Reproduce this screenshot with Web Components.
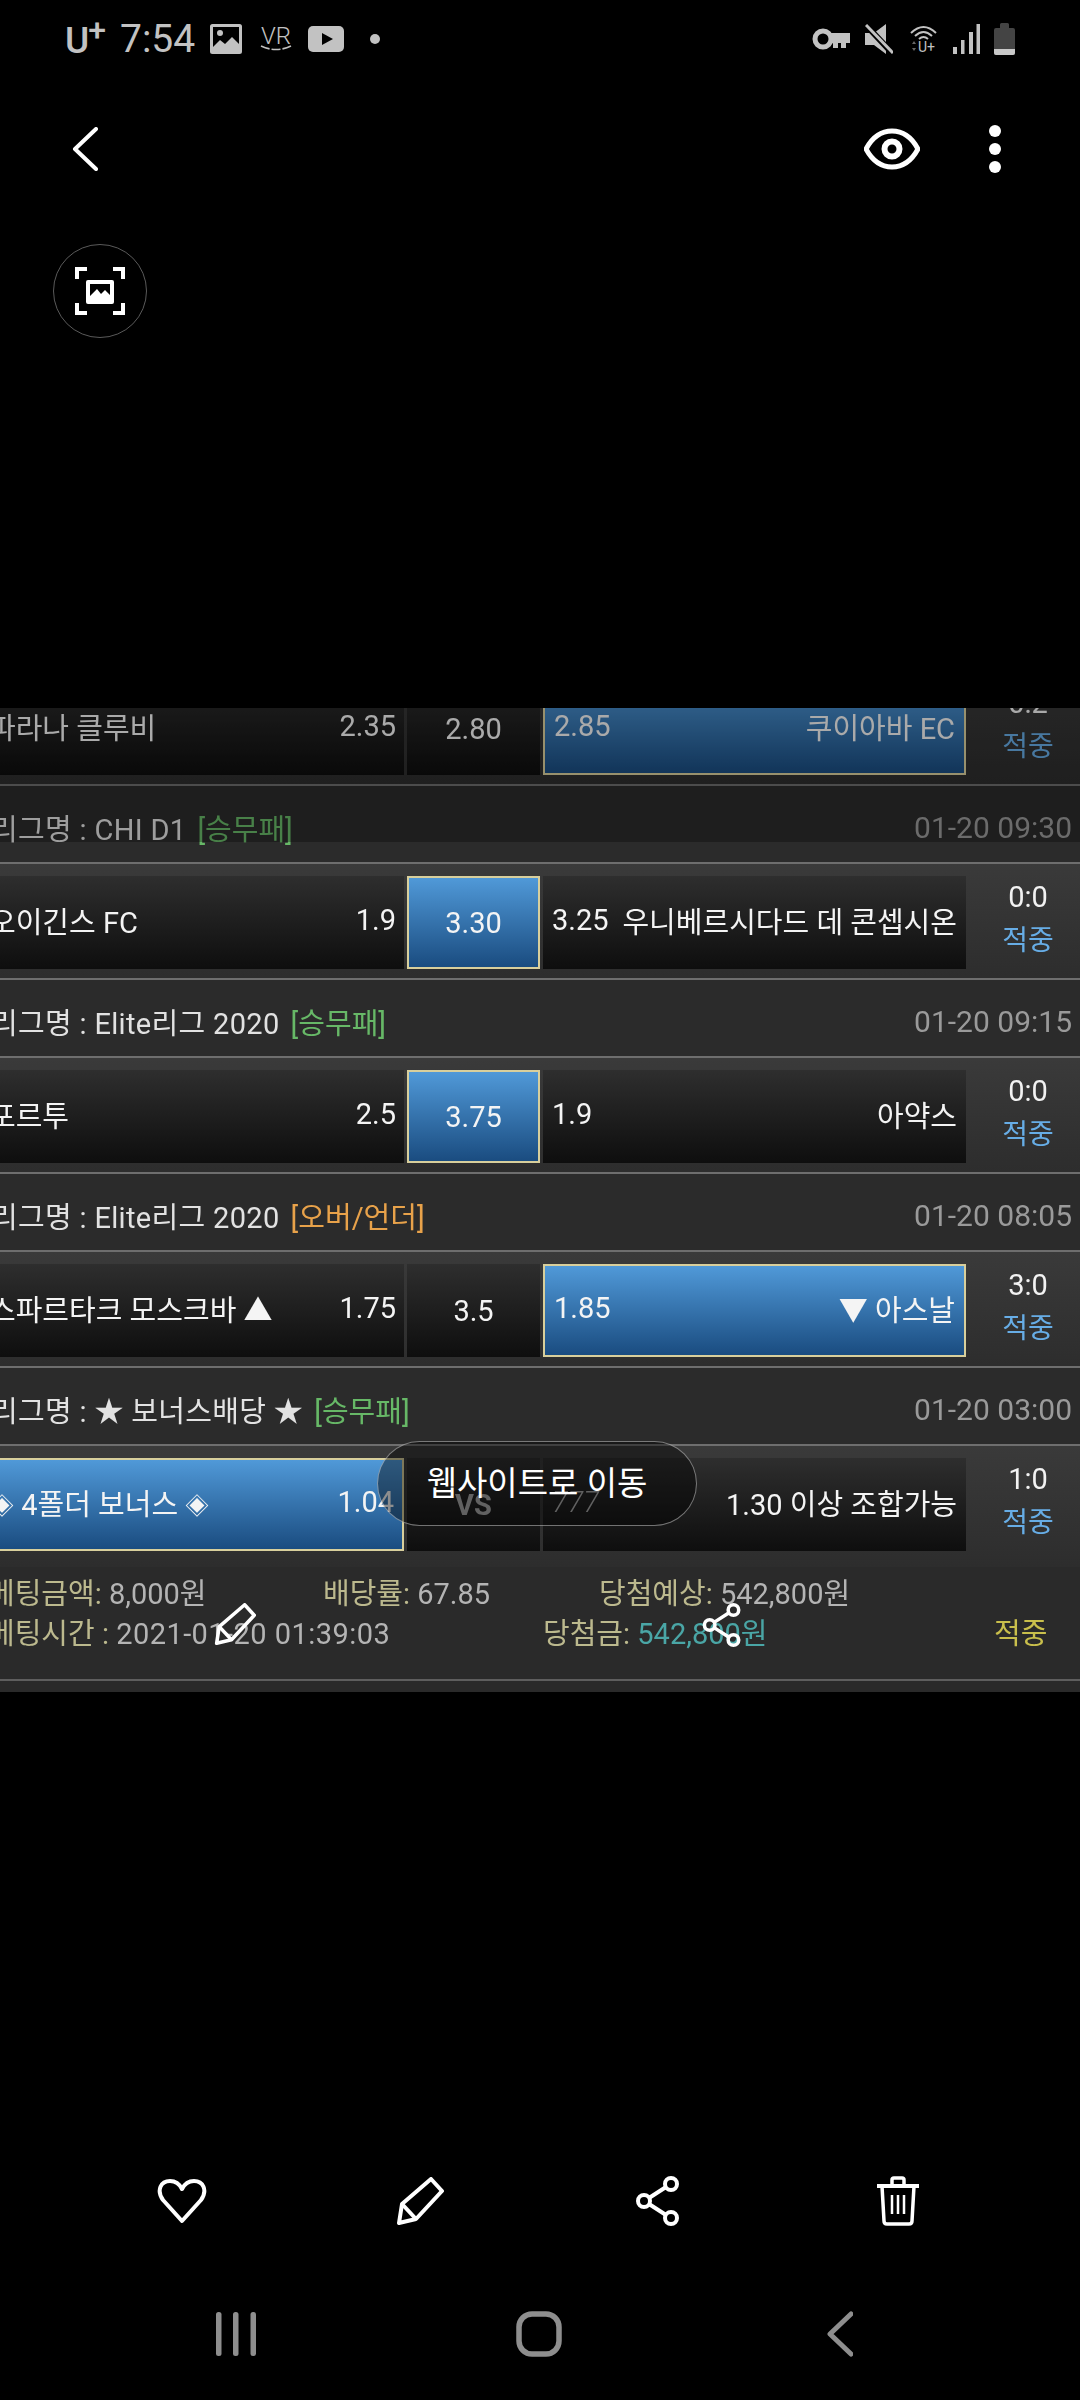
<!DOCTYPE html>
<html lang="ko">
<head>
<meta charset="utf-8">
<title>Screenshot viewer</title>
<style>
html,body{margin:0;padding:0;background:#000;}
body{width:1080px;height:2400px;overflow:hidden;display:flex;flex-direction:column;font-family:Roboto,"Noto Sans CJK KR",sans-serif;color:#eee;font-size:29px;}
</style>
</head>
<body>
<x-status-bar></x-status-bar>
<x-top-bar></x-top-bar>
<x-shot>
  <x-match-row sel="right" odds-l="2.35" odds-m="2.80" odds-r="2.85" score="0:2"><span slot="home">파라나 클루비</span><span slot="away">쿠이아바 EC</span></x-match-row>
  <x-league-header date="01-20 09:30" tag="[승무패]" tone="green">리그명 : CHI D1</x-league-header>
  <x-match-row sel="mid" odds-l="1.9" odds-m="3.30" odds-r="3.25" score="0:0"><span slot="home">오이긴스 FC</span><span slot="away">우니베르시다드 데 콘셉시온</span></x-match-row>
  <x-league-header date="01-20 09:15" tag="[승무패]" tone="green">리그명 : Elite리그 2020</x-league-header>
  <x-match-row sel="mid" odds-l="2.5" odds-m="3.75" odds-r="1.9" score="0:0"><span slot="home">포르투</span><span slot="away">아약스</span></x-match-row>
  <x-league-header date="01-20 08:05" tag="[오버/언더]" tone="orange">리그명 : Elite리그 2020</x-league-header>
  <x-match-row sel="right" odds-l="1.75" odds-m="3.5" odds-r="1.85" score="3:0"><span slot="home">스파르타크 모스크바 ▲</span><span slot="away">▼ 아스날</span></x-match-row>
  <x-league-header date="01-20 03:00" tag="[승무패]" tone="green">리그명 : ★ 보너스배당 ★</x-league-header>
  <x-match-row sel="left" last odds-l="1.04" odds-m="VS" odds-r="777" score="1:0"><span slot="home"><small style="font-size:24px;vertical-align:1px">◈</small> 4폴더 보너스 <small style="font-size:24px;vertical-align:1px">◈</small></span><span slot="away">1.30 이상 조합가능</span></x-match-row>
  <x-bet-footer></x-bet-footer>
</x-shot>
<x-action-bar></x-action-bar>
<x-nav-bar></x-nav-bar>

<script>
const PENCIL = (s) => `<svg width="${s}" height="${s}" viewBox="0 0 48 48" fill="none" stroke="#fff" stroke-width="4" stroke-linejoin="round"><path d="M35 2 46 14 20 42 3 46 6 27Z"/><path d="M6 27 20 42"/></svg>`;
const SHARE = (w,h) => `<svg width="${w}" height="${h}" viewBox="0 0 44 50" fill="none" stroke="#fff" stroke-width="4"><circle cx="35" cy="8" r="6"/><circle cx="8" cy="25" r="6"/><circle cx="35" cy="42" r="6"/><path d="M13 22 30 11M13 28 30 39"/></svg>`;

function def(name, css, html){
  customElements.define(name, class extends HTMLElement{
    constructor(){super();this.attachShadow({mode:'open'});}
    connectedCallback(){
      const h = typeof html==='function' ? html(this) : html;
      this.shadowRoot.innerHTML = `<style>${css}</style>${h}`;
    }
  });
}

def('x-status-bar',`
  :host{display:flex;align-items:center;height:78px;flex:none;padding:0 65px;box-sizing:border-box;color:#c2c2c2;}
  svg{display:block;flex:none;}
  .u{font-size:37px;font-weight:500;line-height:1;width:41px;margin-right:14px;display:flex;align-items:flex-start;position:relative;top:1px;}
  .u sup{font-size:32px;line-height:.6;margin:-1px 0 0 -1px;font-weight:500;}
  .t{font-size:39px;line-height:1;width:76px;margin-right:14px;}
  .sp{flex:1;}
`,`
  <div class="u">U<sup>+</sup></div>
  <div class="t">7:54</div>
  <svg width="32" height="30" viewBox="0 0 32 30" style="margin-right:18px"><rect x="1.5" y="1.5" width="29" height="27" fill="none" stroke="#c2c2c2" stroke-width="3" rx="1"/><circle cx="10" cy="9" r="3" fill="#c2c2c2"/><path d="M2 24 10 16 15 20 22 13 30 21V28H2Z" fill="#c2c2c2"/></svg>
  <svg width="32" height="26" viewBox="0 0 32 26" style="margin-right:16px"><text x="1" y="18" font-family="Roboto" font-weight="300" font-size="24" fill="#c2c2c2" textLength="30" lengthAdjust="spacingAndGlyphs">VR</text><path d="M1 20Q16 27 31 20" fill="none" stroke="#c2c2c2" stroke-width="1.6" stroke-dasharray="9 2"/></svg>
  <svg width="36" height="26" viewBox="0 0 36 26" style="margin-right:26px"><rect width="36" height="26" rx="5" fill="#c2c2c2"/><path d="M14 7 25 13 14 19Z" fill="#000"/></svg>
  <svg width="10" height="10" viewBox="0 0 10 10"><circle cx="5" cy="5" r="5" fill="#c2c2c2"/></svg>
  <div class="sp"></div>
  <svg width="38" height="22" viewBox="0 0 38 22" style="margin-right:15px"><circle cx="11" cy="11" r="8" fill="none" stroke="#c2c2c2" stroke-width="5"/><path d="M19 5H38V15H34V20H29V15H26V20H21V15H19Z" fill="#c2c2c2"/></svg>
  <svg width="28" height="30" viewBox="0 0 28 30" style="margin-right:17px"><path d="M21 0 9 9H0V21H9L21 30Z" fill="#c2c2c2"/><path d="M-1 -1 29 31" stroke="#000" stroke-width="6"/><path d="M1 1 28 29" stroke="#c2c2c2" stroke-width="3"/></svg>
  <svg width="27" height="28" viewBox="0 0 27 28" style="margin-right:16px"><path d="M1 8Q13.5-4 26 8M5 11Q13.5 3 22 11M9 14Q13.5 10 18 14" fill="none" stroke="#c2c2c2" stroke-width="2"/><text x="8" y="27" font-family="Roboto" font-size="14" fill="#c2c2c2">U+</text><path d="M2 19 4 16 6 19ZM2 23 4 26 6 23Z" fill="#666"/></svg>
  <svg width="27" height="30" viewBox="0 0 27 30" style="margin-right:14px"><g fill="#c2c2c2"><rect y="23" width="4" height="7"/><rect x="8" y="16" width="3.5" height="14"/><rect x="16" y="8" width="4" height="22"/><rect x="23.5" width="3.5" height="30"/></g></svg>
  <svg width="21" height="32" viewBox="0 0 21 32"><path d="M6 5V1.500Q6 0 7.500 0H13.500Q15 0 15 1.500V5H19Q21 5 21 7V30Q21 32 19 32H2Q0 32 0 30V7Q0 5 2 5Z" fill="#444"/><path d="M0 26H21V30Q21 32 19 32H2Q0 32 0 30Z" fill="#c8c8c8"/></svg>
`);

def('x-top-bar',`
  :host{display:block;flex:none;height:630px;box-sizing:border-box;padding:50px 0 0 54px;}
  .row{display:flex;align-items:center;height:42px;}
  .sp{flex:1;}
  svg{display:block;flex:none;}
  .lens{width:94px;height:94px;margin-top:74px;margin-left:-1px;border:1px solid #5a5a5a;border-radius:50%;box-sizing:border-box;display:flex;align-items:center;justify-content:center;}
`,`
  <div class="row">
    <svg width="26" height="44" viewBox="0 0 26 44" style="margin-left:18px" fill="none" stroke="#fff" stroke-width="4" stroke-linecap="round" stroke-linejoin="round"><path d="M24 2 3 22 24 42"/></svg>
    <div class="sp"></div>
    <svg width="56" height="42" viewBox="0 0 56 42" fill="none" stroke="#fff"><path d="M2 21C9 8 18 3 28 3S47 8 54 21C47 34 38 39 28 39S9 34 2 21Z" stroke-width="5"/><circle cx="28" cy="21" r="7.500" stroke-width="6"/></svg>
    <svg width="12" height="48" viewBox="0 0 12 48" style="margin:0 79px 0 69px" fill="#fff"><circle cx="6" cy="6" r="6"/><circle cx="6" cy="24" r="6"/><circle cx="6" cy="42" r="6"/></svg>
  </div>
  <div class="lens">
    <svg width="50" height="48" viewBox="0 0 50 48" fill="none" stroke="#fff" stroke-width="4"><path d="M2 12V2H12M38 2H48V12M48 36V46H38M12 46H2V36"/><rect x="11" y="13" width="28" height="24" rx="2" fill="#fff" stroke="none"/><path d="M15 17H35V28L30 23 26 27 22 22 15 29Z" fill="#000" stroke="none"/></svg>
  </div>
`);

def('x-shot',`
  :host{display:block;flex:none;height:984px;position:relative;overflow:hidden;background:#2b2b2b;}
  .flow{height:984px;display:flex;flex-direction:column;justify-content:flex-end;filter:blur(.45px);}
  ::slotted(*){flex:none;}
  .scrim{position:absolute;left:0;right:0;top:0;height:134px;background:rgba(0,0,0,.3);}
  .toast{position:absolute;left:377px;top:733px;width:320px;height:85px;box-sizing:border-box;border:1.5px solid rgba(255,255,255,.42);border-radius:43px;background:rgba(0,0,0,.42);color:#fff;font-size:33px;display:flex;align-items:center;justify-content:center;padding-bottom:5px;}
  .pen{position:absolute;left:214px;top:895px;line-height:0;}
  .shr{position:absolute;left:702px;top:895px;line-height:0;}
`,`
  <div class="flow"><slot></slot></div>
  <div class="scrim"></div>
  <div class="toast">웹사이트로 이동</div>
  <div class="pen">${PENCIL(42)}</div>
  <div class="shr">${SHARE(40,44)}</div>
`);

def('x-league-header',`
  :host{display:flex;align-items:center;box-sizing:border-box;height:78px;padding:6px 8px 0 0;background:#2b2b2b;border-bottom:2px solid #6e6e6e;color:#e2e2e2;white-space:nowrap;}
  .l{margin-left:-9px;letter-spacing:.33px;}
  .g{margin-left:11px;}
  .green{color:#67b867;}
  .orange{color:#e8a24a;}
  .sp{flex:1;}
  .d{color:#9a9a9a;font-size:30px;}
`,(e)=>`<span class="l"><slot></slot></span><span class="g ${e.getAttribute('tone')}">${e.getAttribute('tag')}</span><span class="sp"></span><span class="d">${e.getAttribute('date')}</span>`);

def('x-match-row',`
  :host{display:grid;grid-template-columns:404px 133px 423px 1fr;column-gap:3px;box-sizing:border-box;height:116px;padding:12px 0 9px;background:linear-gradient(#3a3a3a,#2d2d2d);border-bottom:2px solid #6e6e6e;}
  :host([last]){height:121px;padding-bottom:16px;border-bottom:0;}
  .c{height:93px;box-sizing:border-box;display:flex;align-items:center;white-space:nowrap;background:linear-gradient(#2e2e2e,#0e0e0e);color:#f4f4f4;}
  .on{background:linear-gradient(#5099d8,#1a4c80);border:2px solid #d8cf9c;}
  .o{flex:none;}
  .left{padding:0 8px 5px 0;justify-content:space-between;}
  .left.on{margin-left:-4px;padding-left:0;}
  .left ::slotted(*){display:block;margin-left:-11px;}
  .left.on ::slotted(*){margin-left:-8px;}
  .mid{justify-content:center;}
  .right{padding:0 9px 5px;justify-content:space-between;}
  .vs{font-weight:700;color:#a8a8a8;}
  .it{font-style:italic;font-weight:300;color:#a8a8a8;}
  .s{padding-left:7px;text-align:center;display:flex;flex-direction:column;align-items:center;margin-top:-1px;line-height:44px;height:90px;}
  .v{color:#67ade6;font-size:28px;}
  .s div:first-child{color:#f2f2f2;}
`,(e)=>{
  const a=k=>e.getAttribute(k), sel=a('sel');
  const m=a('odds-m'), r=a('odds-r');
  return `<div class="c left ${sel==='left'?'on':''}"><slot name="home"></slot><span class="o">${a('odds-l')}</span></div>
  <div class="c mid ${sel==='mid'?'on':''}"><span class="${m==='VS'?'vs':''}">${m}</span></div>
  <div class="c right ${sel==='right'?'on':''}"><span class="o ${r==='777'?'it':''}">${r}</span><slot name="away"></slot></div>
  <div class="s"><div>${a('score')}</div><div class="v">적중</div></div>`;
});

def('x-bet-footer',`
  :host{display:block;box-sizing:border-box;height:125px;padding-top:7px;background:#2a2a2a;color:#b4b4b4;white-space:nowrap;}
  .r{display:flex;height:40px;line-height:40px;margin-left:-12px;}
  b{font-weight:400;color:#bcb98e;}
  .line{height:2px;background:#5e5e5e;margin-top:25px;}
  .teal{color:#4aa6a6;}
  .y{color:#c9bf4c;}
  .ts{letter-spacing:.45px;}
`,`
  <div class="r"><span style="width:335px"><b>베팅금액:</b> 8,000원</span><span style="width:276px"><b>배당률:</b> 67.85</span><span><b>당첨예상:</b> 542,800원</span></div>
  <div class="r"><span style="width:555px"><b>베팅시간 :</b> <span class="ts">2021-01-20 01:39:03</span></span><span style="width:451px"><b>당첨금:</b> <span class="teal">542,800원</span></span><span class="y">적중</span></div>
  <div class="line"></div>
`);

def('x-action-bar',`
  :host{display:flex;flex:none;height:50px;margin-top:484px;padding-left:63px;}
  div{width:238px;display:flex;align-items:center;justify-content:center;}
`,`
  <div><svg width="50" height="46" viewBox="0 0 50 46" fill="none" stroke="#fff" stroke-width="4" stroke-linejoin="round"><path d="M25 43 6 22C-1 12 4 3 13 3 19 3 23 7 25 11 27 7 31 3 37 3 46 3 51 12 44 22Z"/></svg></div>
  <div>${PENCIL(48)}</div>
  <div>${SHARE(44,50)}</div>
  <div><svg style="margin-left:4px" width="42" height="50" viewBox="0 0 42 50" fill="none" stroke="#fff"><path d="M15 9V4Q15 2 17 2H25Q27 2 27 4V9" stroke-width="3.500"/><path d="M0 10H42" stroke-width="4"/><path d="M5 10 7 45Q7 48 10 48H32Q35 48 35 45L37 10" stroke-width="3.500"/><path d="M15 19V38M21 19V38M27 19V38" stroke-width="2.500"/></svg></div>
`);

def('x-nav-bar',`
  :host{display:flex;flex:none;height:46px;margin-top:85px;padding-left:87px;}
  div{width:301px;display:flex;align-items:center;justify-content:center;}
`,`
  <div><svg style="margin-right:3px" width="40" height="44" viewBox="0 0 40 44" fill="#8e8e8e"><rect width="5.500" height="44" rx="2.500"/><rect x="17" width="5.500" height="44" rx="2.500"/><rect x="34.500" width="5.500" height="44" rx="2.500"/></svg></div>
  <div><svg width="46" height="46" viewBox="0 0 46 46" fill="none" stroke="#8e8e8e" stroke-width="5.500"><rect x="3" y="3" width="40" height="40" rx="13"/></svg></div>
  <div><svg width="26" height="46" viewBox="0 0 26 46" fill="none" stroke="#8e8e8e" stroke-width="5" stroke-linecap="round" stroke-linejoin="round"><path d="M24 3 3 23 24 43"/></svg></div>
`);
</script>
</body>
</html>
